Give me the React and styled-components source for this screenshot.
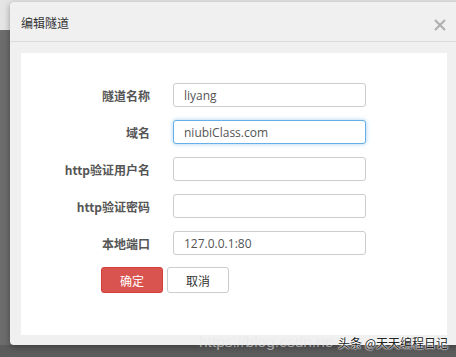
import React from 'react'
import styled, { createGlobalStyle } from 'styled-components'

const Global = createGlobalStyle`
  html, body { margin: 0; padding: 0; }
  body { font-family: "Open Sans", "Noto Sans CJK SC", sans-serif; }
`

const Page = styled.div`
  position: relative;
  width: 456px;
  height: 357px;
  overflow: hidden;
  background: linear-gradient(#e4e4e4 0 30px, #6c6c6c 30px 345px, #5c5c5c 345px);
  padding: 2px 0 0 10px;
  box-sizing: border-box;
`

const Modal = styled.div`
  width: 448px;
  height: 343px;
  background: #f0f0f0;
  border-radius: 4px 0 0 4px;
  box-shadow: 0 2px 6px rgba(0, 0, 0, 0.35);
  display: flex;
  flex-direction: column;
`

const Header = styled.div`
  height: 39px;
  border-bottom: 1px solid #dcdcdc;
  display: flex;
  align-items: center;
  justify-content: space-between;
  padding: 0 12px 0 11px;
`

const Title = styled.div`
  font-family: "Noto Sans CJK SC", sans-serif;
  font-size: 12px;
  color: #333;
  margin-top: 2px;
`

const Close = styled.button`
  border: none;
  background: none;
  padding: 0;
  width: 12px;
  height: 12px;
  margin-top: 6px;
  display: flex;
  cursor: pointer;
`

const Body = styled.div`
  flex: 1;
  padding: 11px 11px 10px 11px;
  display: flex;
`

const Panel = styled.div`
  flex: 1;
  background: #fff;
  padding-top: 30px;
  display: flex;
  flex-direction: column;
`

const Row = styled.div`
  display: flex;
  align-items: center;
  margin-bottom: 13px;
`

const Label = styled.label`
  width: 129px;
  text-align: right;
  font-family: "Noto Sans CJK SC", sans-serif;
  font-weight: bold;
  font-size: 12px;
  color: #555;
  margin-right: 23px;
`

const Input = styled.input`
  width: 193px;
  height: 24px;
  box-sizing: border-box;
  border: 1px solid ${p => (p.$focus ? '#66afe9' : '#cccccc')};
  box-shadow: ${p => (p.$focus ? '0 0 4px rgba(102, 175, 233, 0.6)' : 'none')};
  border-radius: 3px;
  padding: 0 10px;
  font-family: "Open Sans", "Noto Sans CJK SC", sans-serif;
  font-size: 12px;
  color: #555;
  outline: none;
`

const Buttons = styled.div`
  display: flex;
  gap: 4px;
  padding-left: 80px;
  margin-top: -1px;
`

const Button = styled.button`
  width: 62px;
  height: 26px;
  border-radius: 3px;
  border: 1px solid ${p => (p.$primary ? '#d43f3a' : '#cccccc')};
  background: ${p => (p.$primary ? '#d9534f' : '#ffffff')};
  color: ${p => (p.$primary ? '#ffffff' : '#333333')};
  font-family: "Noto Sans CJK SC", sans-serif;
  font-size: 12px;
  padding: 0;
`

const Watermark = styled.div`
  position: absolute;
  left: 199px;
  top: 333px;
  font-family: "Liberation Sans", sans-serif;
  font-size: 15.5px;
  color: rgba(232, 232, 232, 0.6);
  white-space: nowrap;
`

const Credit = styled.div`
  position: absolute;
  left: 338px;
  top: 334px;
  font-family: "Noto Sans CJK SC", sans-serif;
  font-size: 12px;
  color: #222;
  white-space: nowrap;
  text-shadow: 0 0 2px #fff, 0 0 2px #fff, 0 0 1px #fff;
`

const fields = [
  { label: '隧道名称', value: 'liyang' },
  { label: '域名', value: 'niubiClass.com', focus: true },
  { label: 'http验证用户名', value: '' },
  { label: 'http验证密码', value: '' },
  { label: '本地端口', value: '127.0.0.1:80' },
]

export default function App() {
  return (
    <Page>
      <Global />
      <Modal>
        <Header>
          <Title>编辑隧道</Title>
          <Close aria-label="close">
            <svg width="12" height="12" viewBox="0 0 12 12">
              <path d="M1 1L11 11M11 1L1 11" stroke="#b0b0b0" strokeWidth="2.2" />
            </svg>
          </Close>
        </Header>
        <Body>
          <Panel>
            {fields.map(f => (
              <Row key={f.label}>
                <Label>{f.label}</Label>
                <Input $focus={f.focus} defaultValue={f.value} />
              </Row>
            ))}
            <Buttons>
              <Button $primary>确定</Button>
              <Button>取消</Button>
            </Buttons>
          </Panel>
        </Body>
      </Modal>
      <Watermark>https://blog.csdn.ne</Watermark>
      <Credit>头条 @天天编程日记</Credit>
    </Page>
  )
}
